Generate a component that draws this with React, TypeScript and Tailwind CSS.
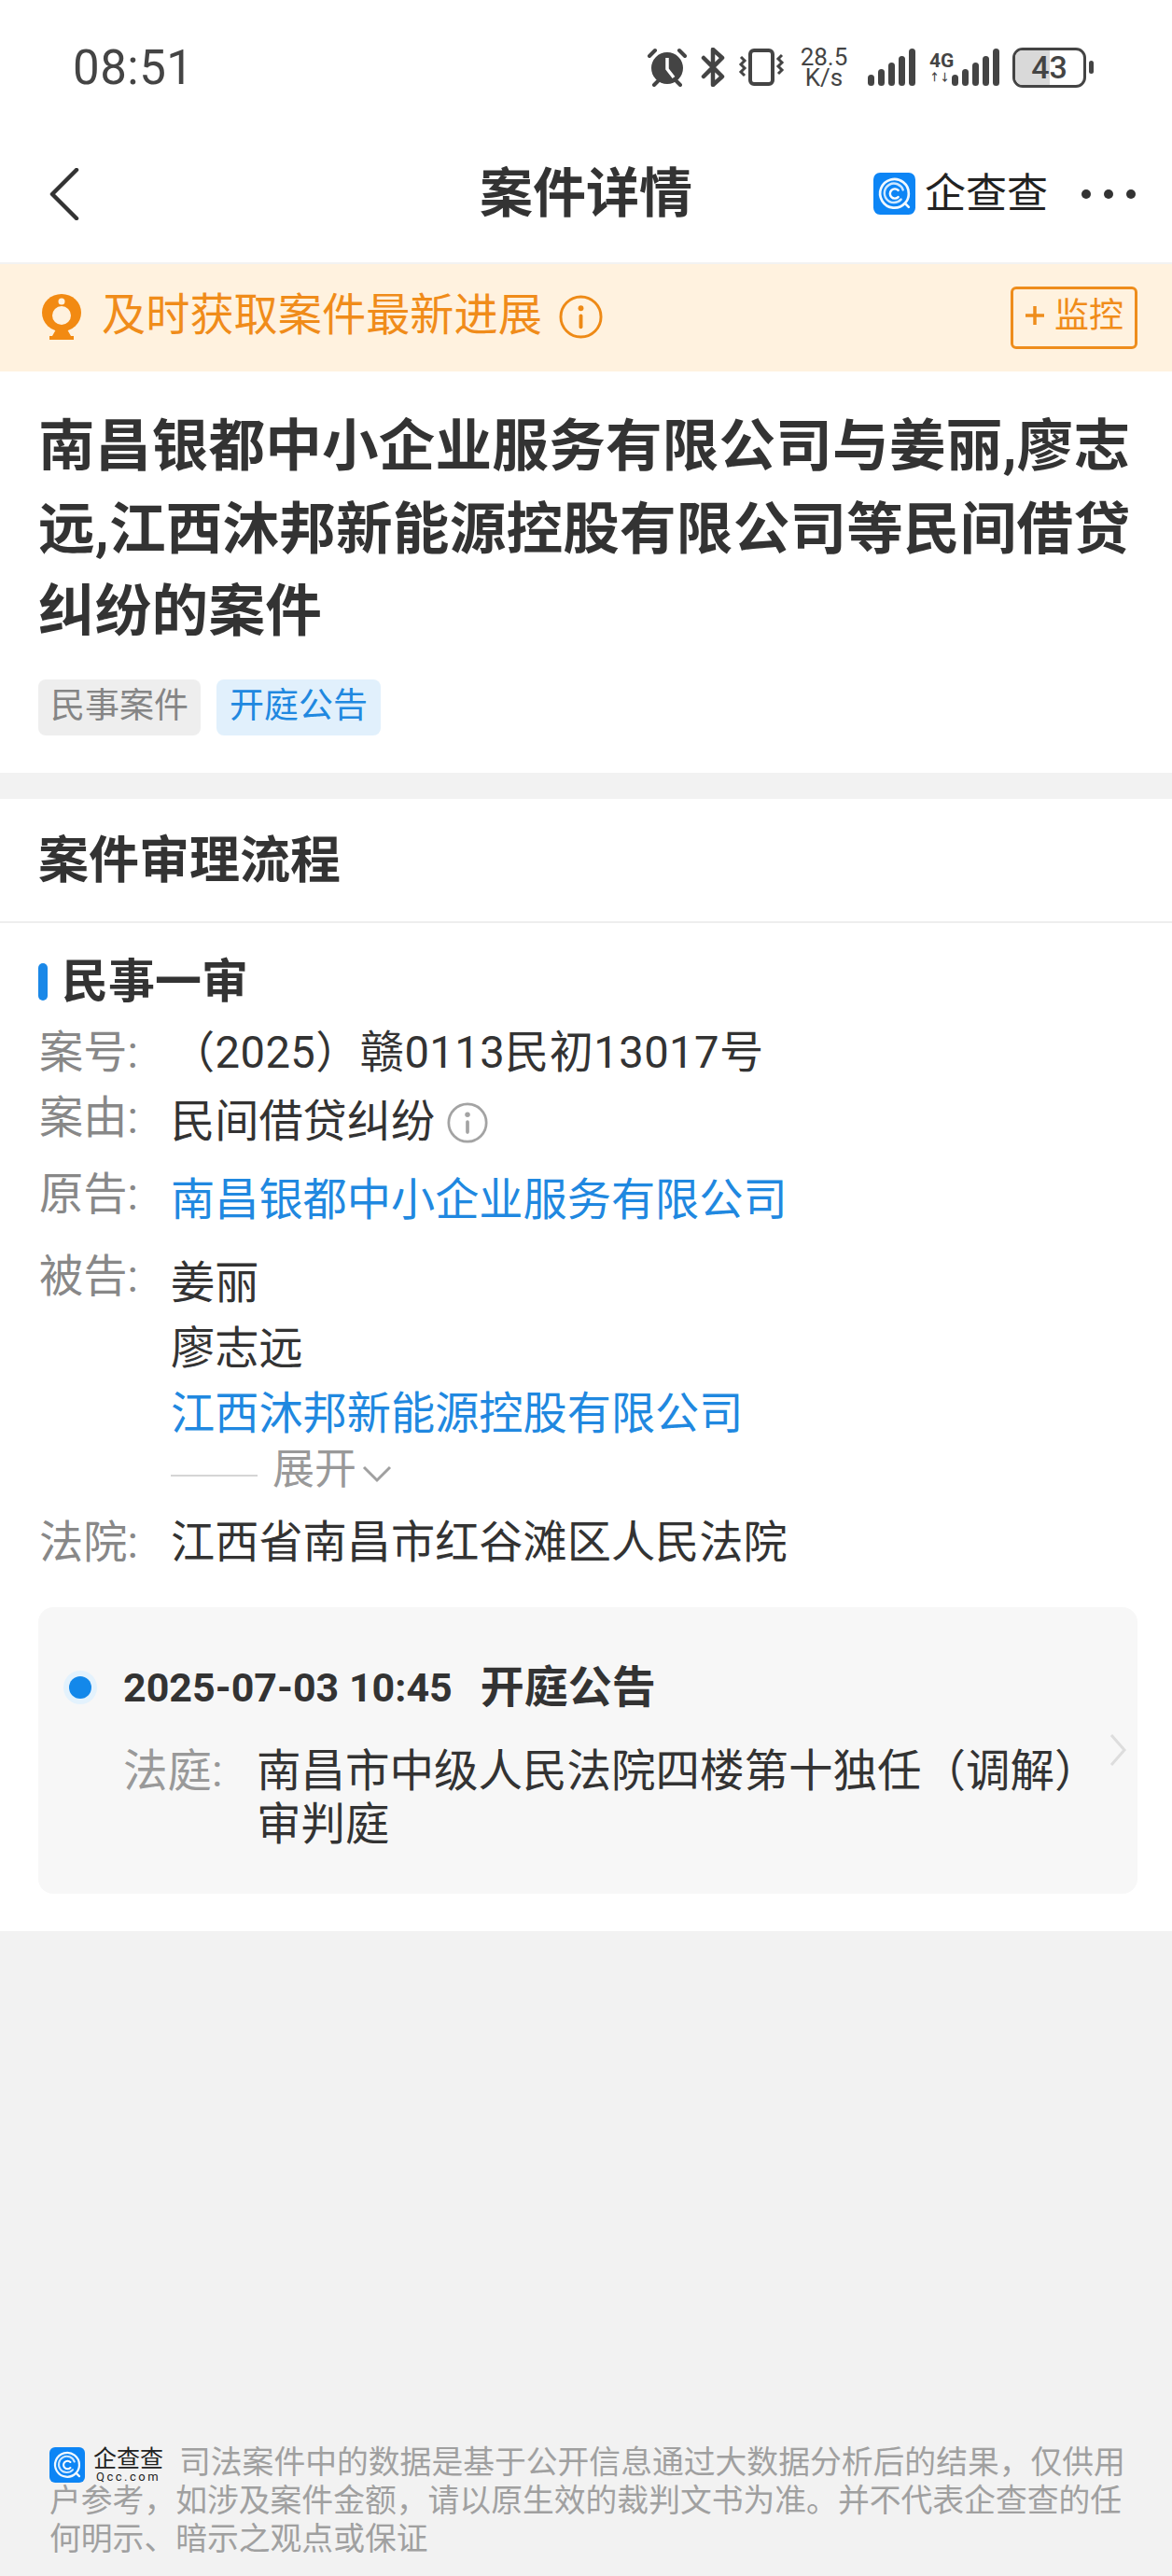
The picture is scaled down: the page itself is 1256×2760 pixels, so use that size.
import type { ReactNode } from 'react';

const FONT = "font-['Roboto','Noto_Sans_CJK_SC',sans-serif]";

function AlarmIcon() {
  return (
    <svg width="44" height="42" viewBox="0 0 44 42" fill="none">
      <circle cx="22" cy="22" r="17" fill="#444" />
      <path d="M22 11v12l7 9" stroke="#fff" strokeWidth="3.5" />
      <path d="M3 9l6-6M41 9l-6-6M8 40l4-4M36 40l-4-4" stroke="#444" strokeWidth="4" strokeLinecap="round" />
    </svg>
  );
}

function BluetoothIcon() {
  return (
    <svg width="26" height="42" viewBox="0 0 26 42" fill="none">
      <path d="M3 11l20 20-10 9V2l10 9L3 31" stroke="#444" strokeWidth="4.5" strokeLinejoin="round" strokeLinecap="round" />
    </svg>
  );
}

function VibrateIcon() {
  return (
    <svg width="50" height="42" viewBox="0 0 50 42" fill="none">
      <rect x="13" y="3" width="24" height="36" rx="4" stroke="#444" strokeWidth="4" />
      <path d="M3 10l4 4-4 4 4 4-4 4 4 4M47 8l-4 4 4 4-4 4 4 4-4 4" stroke="#444" strokeWidth="3" />
    </svg>
  );
}

function SignalBars() {
  const heights = [12, 18, 25, 32, 40];
  return (
    <div className="flex items-end gap-[4px] h-[40px]">
      {heights.map((h, i) => (
        <div key={i} className="w-[7px] rounded-full bg-[#444]" style={{ height: h }} />
      ))}
    </div>
  );
}

function Battery() {
  return (
    <div className="flex items-center gap-[3px]">
      <div className="relative w-[79px] h-[43px] rounded-[11px] border-[3px] border-[#444] overflow-hidden flex items-center justify-center">
        <div className="absolute left-0 top-0 bottom-0 w-[37px] bg-[#d9d9d9]" />
        <span className="relative text-[34px] font-medium leading-none text-[#444]">43</span>
      </div>
      <div className="w-[5px] h-[14px] rounded-full bg-[#444]" />
    </div>
  );
}

function StatusBar() {
  return (
    <div className="h-[140px] flex items-start justify-between pl-[78px] pr-[84px] pt-[51px]">
      <span className="text-[51px] leading-[44px] tracking-[0.5px] text-[#444]">08:51</span>
      <div className="flex items-center h-[44px] -mt-[1px]">
        <AlarmIcon />
        <div className="ml-[14px]"><BluetoothIcon /></div>
        <div className="ml-[14px]"><VibrateIcon /></div>
        <div className="ml-[15px] w-[54px] flex flex-col items-center text-[26px] leading-[22px] text-[#444]">
          <span>28.5</span>
          <span>K/s</span>
        </div>
        <div className="ml-[20px]"><SignalBars /></div>
        <div className="ml-[15px] w-[30px] flex flex-col text-[#444]">
          <span className="text-[21px] font-bold leading-[24px]">4G</span>
          <span className="text-[11px] font-bold leading-[14px]">↑↓</span>
        </div>
        <div className="-ml-[6px]"><SignalBars /></div>
        <div className="ml-[14px]"><Battery /></div>
      </div>
    </div>
  );
}

function QccMark({ size }: { size: number }) {
  return (
    <svg width={size} height={size} viewBox="0 0 44 44" fill="none">
      <rect width="44" height="44" rx="7" fill="#0d85f5" />
      <path d="M33 32a15 15 0 1 1 4-10c0 4-1 7-4 10l4 4" stroke="#fff" strokeWidth="2.6" strokeLinecap="round" opacity="0.95" />
      <path d="M29 28a10 10 0 1 1 2-10" stroke="#cfe8ff" strokeWidth="2.4" strokeLinecap="round" />
      <path d="M26 18.5a5 5 0 1 0 0 7" stroke="#fff" strokeWidth="2.4" strokeLinecap="round" />
    </svg>
  );
}

function NavBar() {
  return (
    <div className="h-[141px] grid grid-cols-[1fr_auto_1fr] items-center">
      <div className="pl-[53px] pb-[6px]">
        <svg width="32" height="56" viewBox="0 0 32 56" fill="none">
          <path d="M29 2L3 28l26 26" stroke="#333" strokeWidth="4.5" strokeLinecap="round" strokeLinejoin="round" />
        </svg>
      </div>
      <h1 className="text-[57px] font-bold leading-none text-[#333] pb-[6px]">案件详情</h1>
      <div className="flex items-center justify-end pr-[39px] pb-[6px]">
        <QccMark size={45} />
        <span className="ml-[10px] text-[44px] leading-none text-[#222]">企查查</span>
        <div className="ml-[36px] flex gap-[14px]">
          <div className="w-[10px] h-[10px] rounded-full bg-[#333]" />
          <div className="w-[10px] h-[10px] rounded-full bg-[#333]" />
          <div className="w-[10px] h-[10px] rounded-full bg-[#333]" />
        </div>
      </div>
    </div>
  );
}

function InfoIcon({ size, color }: { size: number; color: string }) {
  return (
    <svg width={size} height={size} viewBox="0 0 48 48" fill="none">
      <circle cx="24" cy="24" r="22" stroke={color} strokeWidth="3" />
      <circle cx="24" cy="14.5" r="3" fill={color} />
      <rect x="22" y="21" width="4" height="16" rx="2" fill={color} />
    </svg>
  );
}

function Banner() {
  return (
    <div className="h-[117px] border-t-2 border-[#f2f2f2] bg-[#fff2df] flex items-center pl-[44px] pr-[37px] text-[#f08c1a]">
      <svg width="44" height="50" viewBox="0 0 44 50" fill="none" className="mb-[2px]">
        <ellipse cx="22" cy="20" rx="21" ry="20" fill="#f28a12" />
        <ellipse cx="22" cy="23" rx="10" ry="10" fill="#fff2df" />
        <circle cx="22" cy="8" r="3.5" fill="#fff2df" />
        <path d="M16 38h12l4 7h3v4H9v-4h3z" fill="#f28a12" />
      </svg>
      <span className="ml-[21px] mb-[4px] text-[47.2px] leading-none">及时获取案件最新进展</span>
      <div className="ml-[18px] mb-[2px]"><InfoIcon size={47} color="#ee8a16" /></div>
      <div className="ml-auto w-[136px] h-[67px] rounded-[6px] border-[3px] border-[#ee8d1c] flex items-center justify-center gap-[10px] text-[37px] leading-none">
        <svg width="22" height="22" viewBox="0 0 22 22" fill="none" className="mb-[6px]">
          <path d="M11 1v20M1 11h20" stroke="#ee8d1c" strokeWidth="3.5" />
        </svg>
        <span className="mb-[4px]">监控</span>
      </div>
    </div>
  );
}

function CaseHeader() {
  return (
    <section className="bg-white px-[41px] pt-[37px] pb-[40px]">
      <h2 className="text-[60.6px] font-bold leading-[88.5px] text-[#333] tracking-[0.2px]">
        南昌银都中小企业服务有限公司与姜丽,廖志远,江西沐邦新能源控股有限公司等民间借贷纠纷的案件
      </h2>
      <div className="mt-[27px] flex gap-[17px]">
        <span className="w-[174px] h-[60px] rounded-[8px] bg-[#eeeeee] text-[37px] leading-[58px] text-center text-[#858585]">民事案件</span>
        <span className="w-[176px] h-[60px] rounded-[8px] bg-[#e1f0fc] text-[37px] leading-[58px] text-center text-[#2088e0]">开庭公告</span>
      </div>
    </section>
  );
}

function Row({ label, className, children }: { label: string; className: string; children: ReactNode }) {
  return (
    <div className={`flex items-start text-[47.2px] ${className}`}>
      <span className="w-[141px] shrink-0 leading-[60px] text-[#888]">{label}</span>
      {children}
    </div>
  );
}

function HearingCard() {
  return (
    <div className="mt-[39px] ml-[41px] mr-[37px] h-[307px] rounded-[16px] bg-[#f7f7f7] flex items-center pr-[12px]">
      <div className="flex-1 self-start pl-[27px] pt-[56px]">
        <div className="flex items-center">
          <div className="w-[36px] h-[36px] rounded-full bg-[#e3f2fd] flex items-center justify-center">
            <div className="w-[24px] h-[24px] rounded-full bg-[#1388ea]" />
          </div>
          <span className="ml-[28px] text-[43px] font-bold leading-[60px] text-[#333]">2025-07-03 10:45</span>
          <span className="ml-[30px] text-[47px] font-bold leading-[60px] text-[#333]">开庭公告</span>
        </div>
        <div className="mt-[32px] ml-[64px] flex text-[47.5px] leading-[57px]">
          <span className="w-[143px] shrink-0 text-[#999]">法庭:</span>
          <p className="w-[910px] text-[#333]">南昌市中级人民法院四楼第十独任（调解）审判庭</p>
        </div>
      </div>
      <svg width="18" height="36" viewBox="0 0 18 36" fill="none" className="shrink-0">
        <path d="M2 2l14 16L2 34" stroke="#dddddd" strokeWidth="3" />
      </svg>
    </div>
  );
}

function Timeline() {
  return (
    <section className="mt-[28px] bg-white pb-[40px]">
      <div className="h-[133px] border-b-2 border-[#eeeeee] px-[41px] pt-[37px]">
        <h2 className="text-[54px] font-bold leading-[60px] text-[#333]">案件审理流程</h2>
      </div>
      <div className="mt-[33px] px-[41px] flex items-center">
        <div className="w-[10px] h-[40px] rounded-full bg-[#1a88e8]" />
        <h3 className="ml-[15px] text-[50px] font-bold leading-[60px] text-[#333]">民事一审</h3>
      </div>
      <div className="px-[42px]">
        <Row label="案号:" className="mt-[16px]">
          <span className="leading-[60px] tracking-[0.4px] text-[#333]">（2025）赣0113民初13017号</span>
        </Row>
        <Row label="案由:" className="mt-[10px]">
          <div className="pt-[4px] flex items-center">
            <span className="leading-[60px] text-[#333]">民间借贷纠纷</span>
            <div className="ml-[13px] pt-[2px]"><InfoIcon size={44} color="#a3a3a3" /></div>
          </div>
        </Row>
        <Row label="原告:" className="mt-[18px]">
          <span className="pt-[6px] leading-[60px] text-[#2088e0]">南昌银都中小企业服务有限公司</span>
        </Row>
        <Row label="被告:" className="mt-[22px]">
          <div className="pt-[2px] flex flex-col leading-[70px]">
            <span className="text-[#333]">姜丽</span>
            <span className="text-[#333]">廖志远</span>
            <span className="text-[#2088e0]">江西沐邦新能源控股有限公司</span>
          </div>
        </Row>
        <div className="ml-[141px] h-[50px] flex items-center">
          <div className="w-[93px] h-[2px] mt-[12px] bg-[#d5d5d5]" />
          <span className="ml-[16px] text-[45px] leading-none text-[#999]">展开</span>
          <svg width="32" height="20" viewBox="0 0 32 20" fill="none" className="ml-[6px] mt-[8px]">
            <path d="M2 3l14 14L30 3" stroke="#a0a0a0" strokeWidth="3" />
          </svg>
        </div>
        <Row label="法院:" className="mt-[23px]">
          <span className="leading-[60px] text-[#333]">江西省南昌市红谷滩区人民法院</span>
        </Row>
      </div>
      <HearingCard />
    </section>
  );
}

function Footer() {
  return (
    <footer className="mt-auto pl-[53px] pr-[30px] pb-[19px] text-[33.8px] leading-[40.5px] text-[#a0a0a0]">
      <span className="inline-flex items-center align-[-10px] mr-[17px]">
        <QccMark size={38} />
        <span className="ml-[9px] flex flex-col items-center text-[#222]">
          <span className="text-[25px] leading-[25px]">企查查</span>
          <span className="text-[13px] leading-[13px] tracking-[2.5px]">Qcc.com</span>
        </span>
      </span>
      司法案件中的数据是基于公开信息通过大数据分析后的结果，仅供用户参考，如涉及案件金额，请以原生效的裁判文书为准。并不代表企查查的任何明示、暗示之观点或保证
    </footer>
  );
}

export default function App() {
  return (
    <div className={`w-[1256px] h-[2760px] bg-[#f2f2f2] flex flex-col overflow-hidden ${FONT}`}>
      <div className="bg-white">
        <StatusBar />
        <NavBar />
      </div>
      <Banner />
      <CaseHeader />
      <Timeline />
      <Footer />
    </div>
  );
}
